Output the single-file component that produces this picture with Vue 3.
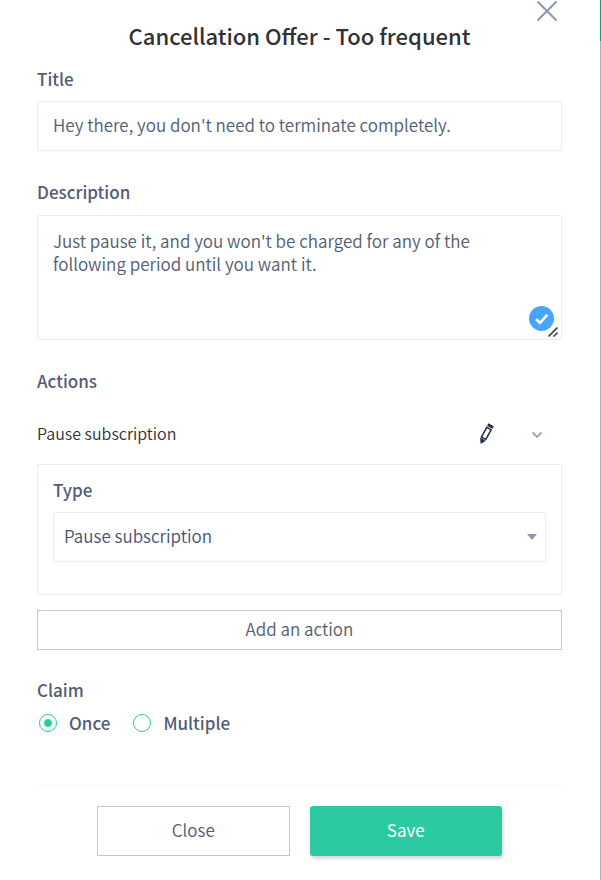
<script setup>
import { ref } from 'vue'

const title = ref("Hey there, you don't need to terminate completely.")
const description = ref("Just pause it, and you won't be charged for any of the following period until you want it.")
const type = ref('pause')
const claim = ref('once')
</script>

<template>
  <div class="page">
    <form class="dialog" @submit.prevent>
      <button class="dismiss" type="button" aria-label="Dismiss">
        <svg width="20" height="20" viewBox="0 0 20 20" fill="none" stroke="#8f98ae" stroke-width="2">
          <path d="M0.5 0.5L19.5 19.5M19.5 0.5L0.5 19.5" />
        </svg>
      </button>

      <h1>Cancellation Offer - Too frequent</h1>

      <section class="field title-field">
        <label class="label" for="title">Title</label>
        <input id="title" v-model="title" class="control" type="text" />
      </section>

      <section class="field description-field">
        <label class="label" for="description">Description</label>
        <div class="area">
          <textarea id="description" v-model="description" class="control" spellcheck="false"></textarea>
          <svg class="badge" width="25" height="25" viewBox="0 0 25 25">
            <circle cx="12.5" cy="12.5" r="12.5" fill="#46a6ff" />
            <path d="M7 13.2L11 17L18.4 8.6" fill="none" stroke="#fff" stroke-width="2.6" />
          </svg>
          <svg class="grip" width="10" height="10" viewBox="0 0 10 10" stroke="#4a4a4a" stroke-width="1.7">
            <path d="M0.5 9.5L9.5 0.5M5.5 9.5L9.5 5.5" />
          </svg>
        </div>
      </section>

      <section class="actions">
        <h2 class="label">Actions</h2>
        <div class="action-row">
          <span class="action-name">Pause subscription</span>
          <button class="icon-button" type="button" aria-label="Edit action">
            <svg width="16" height="22" viewBox="0 0 16 22">
              <g transform="translate(8 11) rotate(29)">
                <path d="M-3 -10.6h6v2.8h-6z" fill="#252b40" />
                <path d="M-2.5 -6.2h5v11.2h-5z" fill="#fff" stroke="#252b40" stroke-width="1.5" />
                <path d="M-3.2 6.2h6.4L0 11.2z" fill="#252b40" />
              </g>
            </svg>
          </button>
          <button class="icon-button" type="button" aria-label="Collapse action">
            <svg width="10" height="8" viewBox="0 0 10 8" fill="none" stroke="#9aa1b9" stroke-width="1.8">
              <path d="M0.5 2.5L5 7L9.5 2.5" />
            </svg>
          </button>
        </div>
        <div class="panel">
          <label class="label" for="type">Type</label>
          <div class="select">
            <select id="type" v-model="type" class="control">
              <option value="pause">Pause subscription</option>
            </select>
            <svg class="arrow" width="10" height="6" viewBox="0 0 10 6"><path d="M0 0h10L5 6z" fill="#8c96ac" /></svg>
          </div>
        </div>
        <button class="outline add" type="button">Add an action</button>
      </section>

      <fieldset class="claim">
        <legend class="label">Claim</legend>
        <div class="choices">
          <label class="label choice"><input v-model="claim" type="radio" name="claim" value="once" />Once</label>
          <label class="label choice"><input v-model="claim" type="radio" name="claim" value="multiple" />Multiple</label>
        </div>
      </fieldset>

      <footer>
        <button class="outline" type="button">Close</button>
        <button class="save" type="submit">Save</button>
      </footer>
    </form>
  </div>
</template>

<style>
body {
  background: #fff;
}
</style>

<style scoped>
* {
  box-sizing: border-box;
}
.page {
  min-height: 100vh;
  padding-right: 1px;
  background: linear-gradient(#159c7a 41px, #b0b0b0 41px);
  font-family: "Noto Sans CJK SC", "Noto Sans", sans-serif;
  font-size: 17px;
  font-weight: 350;
  line-height: 24px;
  color: #525c74;
}
.dialog {
  position: relative;
  min-height: 100vh;
  padding: 20px 38px 24px 37px;
  background: #fff;
}
button,
input,
textarea,
select {
  margin: 0;
  font: inherit;
  color: inherit;
}
button {
  padding: 0 0 2px;
  border: 0;
  background: none;
}
.dismiss,
.icon-button {
  padding: 0;
}
.dismiss {
  position: absolute;
  top: 1px;
  right: 43px;
}
svg {
  display: block;
}
h1 {
  margin: 0;
  font-size: 22px;
  font-weight: 500;
  line-height: 30px;
  text-align: center;
  color: #303133;
}
.label {
  display: block;
  margin: 0;
  padding: 0;
  font-size: 17px;
  font-weight: 500;
  line-height: 22px;
}
.field {
  display: flex;
  flex-direction: column;
  gap: 11px;
}
.title-field {
  margin-top: 18px;
}
.description-field {
  margin-top: 30px;
  gap: 12px;
}
.control {
  display: block;
  width: 100%;
  height: 50px;
  padding: 0 15px 3px;
  border: 1px solid #ededed;
  border-radius: 2px;
  background: #fff;
  outline: none;
}
.area,
.select {
  position: relative;
}
textarea.control {
  height: 125px;
  padding: 13px 48px 13px 15px;
  line-height: 23px;
  resize: none;
}
.badge {
  position: absolute;
  right: 8px;
  bottom: 9px;
}
.grip {
  position: absolute;
  right: 4px;
  bottom: 3px;
}
.actions {
  margin-top: 30px;
}
.action-row {
  display: flex;
  align-items: center;
  gap: 38px;
  height: 40px;
  margin-top: 22px;
  padding-right: 20px;
}
.action-name {
  flex: 1;
  padding-bottom: 3px;
  font-size: 16px;
  color: #303133;
}
.panel {
  margin-top: 10px;
  padding: 14px 15px 32px;
  border: 1px solid #ededed;
}
.select {
  margin-top: 11px;
}
select.control {
  padding: 0 10px 2px;
  appearance: none;
  color: #47536e;
}
.arrow {
  position: absolute;
  top: 22px;
  right: 9px;
  pointer-events: none;
}
.outline {
  border: 1px solid #c4c6cf;
  background: #fff;
}
.add {
  width: 100%;
  height: 40px;
  margin-top: 15px;
}
.claim {
  min-width: 0;
  margin: 29px 0 0;
  padding: 0;
  border: 0;
}
.choices {
  display: flex;
  gap: 23px;
  margin-top: 11px;
  padding-left: 2px;
}
.choice {
  display: flex;
  align-items: center;
  gap: 12px;
}
.choice input {
  width: 18px;
  height: 18px;
  border: 1px solid #2bcaa2;
  border-radius: 50%;
  appearance: none;
}
.choice input:checked {
  background: radial-gradient(circle, #2bcaa2 3px, transparent 5px);
}
footer {
  display: grid;
  grid-template-columns: 1fr 1fr;
  gap: 20px;
  margin-top: 51px;
  padding: 20px 60px 0;
  border-top: 1px solid #f7f7f7;
}
footer button {
  height: 50px;
}
.save {
  border-radius: 3px;
  background: #2bcaa2;
  color: #fff;
  font-weight: 400;
  box-shadow: 1px 2px 4px rgba(0, 0, 0, 0.2);
}
</style>
